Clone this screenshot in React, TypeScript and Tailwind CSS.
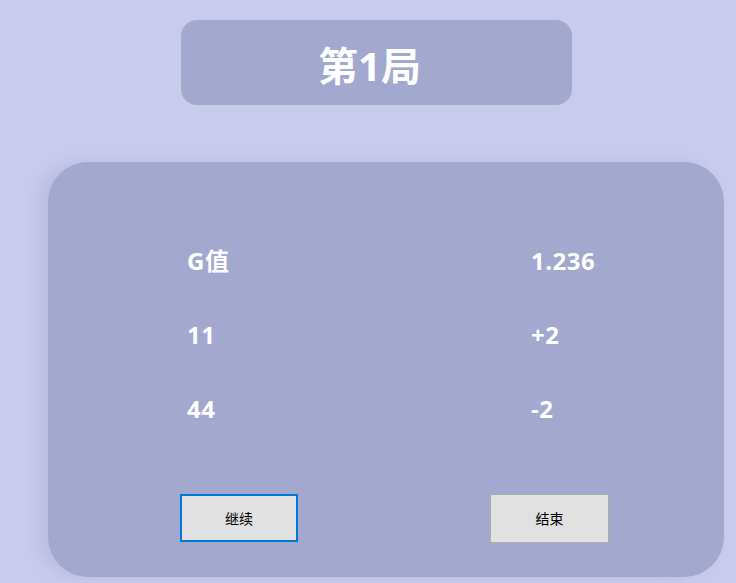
import React from 'react';

const rows: [string, string][] = [
  ['G值', '1.236'],
  ['11', '+2'],
  ['44', '-2'],
];

export default function App() {
  return (
    <div
      className="w-[736px] h-[583px] overflow-hidden bg-[#c8cbec] pt-[20px]"
      style={{ fontFamily: '"Noto Sans", "Noto Sans CJK SC", sans-serif' }}
    >
      {/* Round title */}
      <div className="ml-[181px] w-[391px] h-[85px] rounded-[16px] bg-[#a3a8cf] flex items-center justify-center pr-[14px] pt-[6px]">
        <span className="text-[40px] font-bold text-white leading-none">第1局</span>
      </div>

      {/* Score panel */}
      <div className="mt-[57px] ml-[48px] w-[676px] h-[415px] rounded-[40px] bg-[#a3a8cf] shadow-[-10px_0px_14px_rgba(130,135,180,0.18)] pt-[84px]">
        <div className="flex flex-col gap-[44px]">
          {rows.map(([label, value]) => (
            <div key={label} className="flex h-[30px] items-center text-[24px] font-bold text-white leading-[30px] tracking-[0.5px]">
              <span className="ml-[139px] w-[344px]">{label}</span>
              <span>{value}</span>
            </div>
          ))}
        </div>

        <div className="flex mt-[70px]">
          <button className="ml-[132px] w-[118px] h-[48px] bg-[#e1e1e1] border-2 border-[#0078d7] text-[14px] text-black">
            继续
          </button>
          <button className="ml-[192px] w-[119px] h-[49px] bg-[#e1e1e1] border border-[#adadad] text-[14px] text-black">
            结束
          </button>
        </div>
      </div>
    </div>
  );
}
